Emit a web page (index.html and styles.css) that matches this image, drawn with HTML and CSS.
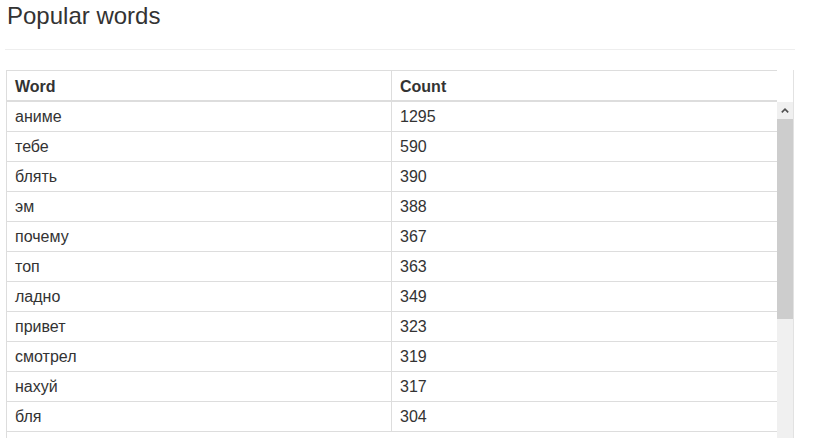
FILE: index.html
```html
<!DOCTYPE html>
<html>
<head>
<meta charset="utf-8">
<link rel="stylesheet" href="styles.css">
</head>
<body>
<div class="page">
  <h3 class="title">Popular words</h3>
  <hr class="rule">
  <div class="panel">
    <div class="head">
      <table class="grid">
        <tr><th class="c-word">Word</th><th class="c-count">Count</th></tr>
      </table>
      <div class="head-gap"></div>
    </div>
    <div class="body">
      <table class="grid rows">
        <tr><td class="c-word">аниме</td><td class="c-count">1295</td></tr>
        <tr><td class="c-word">тебе</td><td class="c-count">590</td></tr>
        <tr><td class="c-word">блять</td><td class="c-count">390</td></tr>
        <tr><td class="c-word">эм</td><td class="c-count">388</td></tr>
        <tr><td class="c-word">почему</td><td class="c-count">367</td></tr>
        <tr><td class="c-word">топ</td><td class="c-count">363</td></tr>
        <tr><td class="c-word">ладно</td><td class="c-count">349</td></tr>
        <tr><td class="c-word">привет</td><td class="c-count">323</td></tr>
        <tr><td class="c-word">смотрел</td><td class="c-count">319</td></tr>
        <tr><td class="c-word">нахуй</td><td class="c-count">317</td></tr>
        <tr><td class="c-word">бля</td><td class="c-count">304</td></tr>
      </table>
      <div class="scrollbar">
        <div class="sb-btn">
          <svg width="8" height="5" viewBox="0 0 8 5"><path d="M0.8 4.4 L4 1.2 L7.2 4.4" fill="none" stroke="#505050" stroke-width="1.6"/></svg>
        </div>
        <div class="sb-thumb"></div>
        <div class="sb-track"></div>
      </div>
    </div>
  </div>
</div>
</body>
</html>
```

FILE: styles.css
```css
html, body {
  margin: 0;
  padding: 0;
  background: #fff;
}
body {
  font-family: "Liberation Sans", Arial, Helvetica, sans-serif;
  font-size: 16px;
  color: #333;
  height: 438px;
  overflow: hidden;
}
.page {
  padding: 3px 21px 0 6px;
  width: 788px;
}
.title {
  margin: 0;
  font-size: 24px;
  font-weight: 400;
  line-height: 26.4px;
  color: #333;
  padding-left: 1px;
}
.rule {
  margin: 20px -1px 20px -1px;
  border: 0;
  border-top: 1px solid #eee;
  height: 0;
}
.panel {
  border-left: 1px solid #ddd;
  border-right: 1px solid #e2e2e2;
  width: 786px;
}
.head {
  display: flex;
}
.head .grid {
  border-top: 1px solid #ddd;
}
.head-gap {
  width: 16px;
}
.grid {
  border-collapse: collapse;
  width: 770px;
  table-layout: fixed;
}
.c-word {
  width: 368px;
  border-right: 1px solid #ddd;
}
.grid th, .grid td {
  text-align: left;
  padding: 5px 8px 4px 8px;
  line-height: 20px;
  vertical-align: top;
}
.grid th {
  font-weight: 700;
  padding-top: 6px;
  padding-bottom: 3px;
  border-bottom: 2px solid #ddd;
}
.grid td {
  border-bottom: 1px solid #ddd;
}
.body {
  display: flex;
  align-items: flex-start;
}
.scrollbar {
  width: 16px;
  display: flex;
  flex-direction: column;
  background: #f0f0f0;
  height: 340px;
}
.sb-btn {
  height: 17px;
  display: flex;
  align-items: center;
  justify-content: center;
  background: #f0f0f0;
}
.sb-thumb {
  height: 200px;
  background: #cdcdcd;
}
.sb-track {
  flex: 1;
  background: #f0f0f0;
}
```
